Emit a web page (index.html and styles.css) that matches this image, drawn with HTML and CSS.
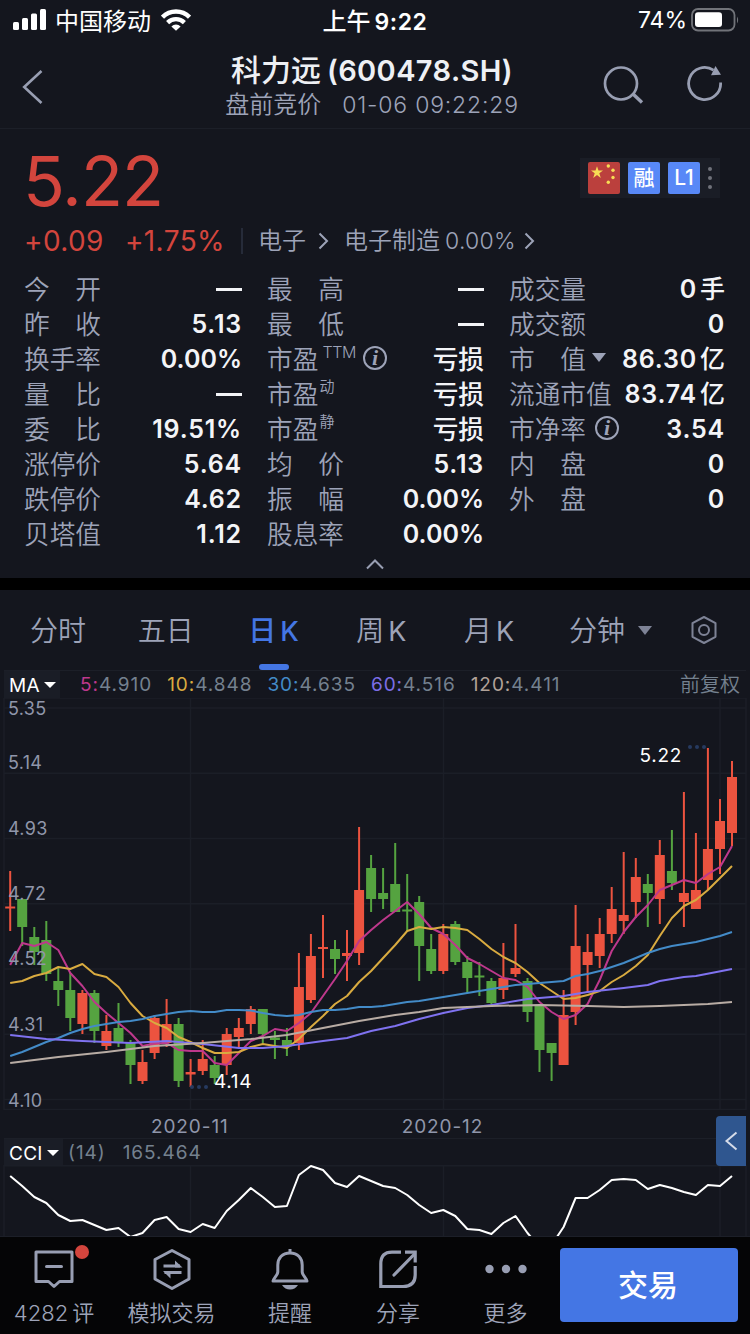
FILE: index.html
```
<!DOCTYPE html>
<html lang="zh-CN">
<head>
    <meta charset="UTF-8">
    <meta name="viewport" content="width=device-width, initial-scale=1.0">
    <title>科力远(600478.SH)</title>
    <link rel="stylesheet" href="styles.css">
    <script src="chart.js" defer></script>
</head>
<body>
    <div class="status">
        <svg class="signal" width="34" height="22" viewBox="0 0 34 22" fill="#fff">
            <rect x="0" y="13" width="6" height="8" rx="1.5"/>
            <rect x="9" y="9" width="6" height="12" rx="1.5"/>
            <rect x="18" y="4.5" width="6" height="16.5" rx="1.5"/>
            <rect x="27" y="0" width="6" height="21" rx="1.5"/>
        </svg>
        <span class="carrier">中国移动</span>
        <svg class="wifi" width="30" height="22" viewBox="0 0 30 22" fill="none" stroke="#fff" stroke-width="4.4">
            <path d="M1.5 8.2A19 19 0 0 1 28.5 8.2"/>
            <path d="M6.6 13.6A12 12 0 0 1 23.4 13.6"/>
            <path d="M15 21.8L10.4 17.4A6.6 6.6 0 0 1 19.6 17.4Z" fill="#fff" stroke="none"/>
        </svg>
        <span class="clock">上午<b>9:22</b></span>
        <span class="percent">74%</span>
        <svg class="battery" width="49" height="24" viewBox="0 0 49 24">
            <rect x="1" y="1" width="42.5" height="21.5" rx="6" fill="none" stroke="#717379" stroke-width="1.8"/>
            <rect x="4" y="4.3" width="27" height="14.8" rx="3" fill="#fff"/>
            <path d="M46 8.5Q48.3 12 46 15.5Z" fill="#717379"/>
        </svg>
    </div>

    <div class="nav">
        <svg class="back" width="22" height="36" viewBox="0 0 22 36" fill="none" stroke="#989eb2" stroke-width="2.6">
            <path d="M19.5 2L2.2 18L19.5 34"/>
        </svg>
        <div class="nav-title">
            <h1>科力远<span>(600478.SH)</span></h1>
            <p>盘前竞价<span>01-06 09:22:29</span></p>
        </div>
        <div class="nav-icons">
            <svg width="42" height="40" viewBox="0 0 42 40" fill="none" stroke="#989eb2" stroke-width="2.7">
                <circle cx="19" cy="18.5" r="16"/>
                <path d="M30.5 28.5L40 37.5" stroke-width="3.4"/>
            </svg>
            <svg width="38" height="40" viewBox="0 0 38 40" fill="none" stroke="#989eb2" stroke-width="2.8">
                <path d="M34.6 17.5A16 16 0 1 1 27.5 5.2"/>
                <path d="M29.5 1L35 9.8L25 10.3Z" fill="#989eb2" stroke="none"/>
            </svg>
        </div>
    </div>

    <div class="quote">
        <div class="price-row">
            <div class="price">5.22</div>
            <div class="tags">
                <svg width="32" height="32" viewBox="0 0 32 32">
                    <rect width="32" height="32" rx="2" fill="#bb403d"/>
                    <g fill="#f7dc55">
                        <path d="M9 4.2L10.5 8.6H15L11.3 11.3L12.8 15.9L9 13.1L5.2 15.9L6.7 11.3L3 8.6H7.5Z"/>
                        <circle cx="20.3" cy="4" r="1.7"/>
                        <circle cx="25" cy="8.3" r="1.7"/>
                        <circle cx="25" cy="15.5" r="1.7"/>
                        <circle cx="20.3" cy="20.2" r="1.7"/>
                    </g>
                </svg>
                <span class="tag">融</span>
                <span class="tag">L1</span>
                <svg width="4" height="24" viewBox="0 0 4 24" fill="#6f727b">
                    <circle cx="2" cy="3" r="2"/>
                    <circle cx="2" cy="12" r="2"/>
                    <circle cx="2" cy="21" r="2"/>
                </svg>
            </div>
        </div>
        <div class="change-row">
            <span class="change">+0.09</span>
            <span class="change change-rate">+1.75%</span>
            <span class="sector">电子</span>
            <svg class="arrow" width="11" height="18" viewBox="0 0 11 18"><path d="M1.5 1.5L9 9L1.5 16.5"/></svg>
            <span class="sector-sub">电子制造<i>0.00%</i></span>
            <svg class="arrow arrow-last" width="11" height="18" viewBox="0 0 11 18"><path d="M1.5 1.5L9 9L1.5 16.5"/></svg>
        </div>
        <div class="details">
            <dl>
                <div><dt>今　开</dt><dd><hr></dd></div>
                <div><dt>昨　收</dt><dd>5.13</dd></div>
                <div><dt>换手率</dt><dd class="pct">0.00%</dd></div>
                <div><dt>量　比</dt><dd><hr></dd></div>
                <div><dt>委　比</dt><dd>19.51%</dd></div>
                <div><dt>涨停价</dt><dd>5.64</dd></div>
                <div><dt>跌停价</dt><dd>4.62</dd></div>
                <div><dt>贝塔值</dt><dd>1.12</dd></div>
            </dl>
            <dl>
                <div><dt>最　高</dt><dd><hr></dd></div>
                <div><dt>最　低</dt><dd><hr></dd></div>
                <div><dt>市盈<sup class="ttm">TTM</sup><em class="info">i</em></dt><dd class="cn">亏损</dd></div>
                <div><dt>市盈<sup>动</sup></dt><dd class="cn">亏损</dd></div>
                <div><dt>市盈<sup>静</sup></dt><dd class="cn">亏损</dd></div>
                <div><dt>均　价</dt><dd>5.13</dd></div>
                <div><dt>振　幅</dt><dd class="pct">0.00%</dd></div>
                <div><dt>股息率</dt><dd class="pct">0.00%</dd></div>
            </dl>
            <dl>
                <div><dt>成交量</dt><dd>0<s>手</s></dd></div>
                <div><dt>成交额</dt><dd>0</dd></div>
                <div><dt>市　值<u class="caret"></u></dt><dd>86.30<s>亿</s></dd></div>
                <div><dt>流通市值</dt><dd>83.74<s>亿</s></dd></div>
                <div><dt>市净率<em class="info">i</em></dt><dd>3.54</dd></div>
                <div><dt>内　盘</dt><dd>0</dd></div>
                <div><dt>外　盘</dt><dd>0</dd></div>
            </dl>
        </div>
        <svg class="fold" width="18" height="11" viewBox="0 0 18 11" fill="none" stroke="#989eb2" stroke-width="2">
            <path d="M1 9.5L9 1.5L17 9.5"/>
        </svg>
    </div>

    <div class="tabs">
        <div class="tab">分时</div>
        <div class="tab">五日</div>
        <div class="tab active">日<span>K</span></div>
        <div class="tab">周<span>K</span></div>
        <div class="tab">月<span>K</span></div>
        <div class="tab">分钟</div>
        <u class="caret"></u>
        <svg class="setting" width="28" height="30" viewBox="0 0 28 30" fill="none" stroke="#7e8396" stroke-width="2">
            <path d="M14 2L25.5 8.2V21.8L14 28L2.5 21.8V8.2Z" stroke-linejoin="round"/>
            <circle cx="14" cy="15" r="5"/>
        </svg>
    </div>

    <div class="chart">
        <div class="index-row">
            <div class="index-name">MA<u class="caret"></u></div>
            <span class="ma ma5"><b>5:</b>4.910</span>
            <span class="ma ma10"><b>10:</b>4.848</span>
            <span class="ma ma30"><b>30:</b>4.635</span>
            <span class="ma ma60"><b>60:</b>4.516</span>
            <span class="ma ma120"><b>120:</b>4.411</span>
            <span class="adjust">前复权</span>
        </div>
        <svg class="plot" id="kline" width="750" height="412" viewBox="0 698 750 412"></svg>
        <div class="dates">
            <span>2020-11</span>
            <span>2020-12</span>
        </div>
        <div class="index-row cci-row">
            <div class="index-name">CCI<u class="caret"></u></div>
            <span class="cci-param">(14)</span>
            <span class="cci-value">165.464</span>
        </div>
        <svg class="plot" id="cci" width="750" height="71" viewBox="0 1165 750 71"></svg>
        <div class="drawer">
            <svg width="14" height="20" viewBox="0 0 14 20" fill="none" stroke="#d5dbe8" stroke-width="2">
                <path d="M12.5 1.5L2.5 10L12.5 18.5"/>
            </svg>
        </div>
    </div>

    <div class="toolbar">
        <div class="tool tool-comment">
            <svg width="42" height="42" viewBox="0 0 42 42" fill="none" stroke="#989eb2" stroke-width="3" stroke-linejoin="round">
                <path d="M3 4H39V33.5H26.5L21 38.5L15.5 33.5H3Z"/>
                <path d="M13.5 18.5H28.5" stroke-linecap="round"/>
            </svg>
            <i class="dot"></i>
            <span>4282<s>评</s></span>
        </div>
        <div class="tool tool-mock">
            <svg width="42" height="42" viewBox="0 0 42 42" fill="none" stroke="#989eb2" stroke-width="3" stroke-linejoin="round">
                <path d="M21 2.5L38 11.5V31L21 40.5L4 31V11.5Z"/>
                <path d="M12.5 18H29M13.5 24.5H30.5" stroke-width="2.8"/>
                <path d="M24 12.5L31.5 19.4H24ZM19.5 30.5L12 23.1H19.5Z" fill="#989eb2" stroke="none"/>
            </svg>
            <span>模拟交易</span>
        </div>
        <div class="tool tool-alert">
            <svg width="42" height="42" viewBox="0 0 42 42" fill="none" stroke="#989eb2" stroke-width="3" stroke-linejoin="round">
                <path d="M21 1V5"/>
                <path d="M21 5C13 5 8.8 10.5 8.8 17V24C8.8 27 4 31 4 33H38C38 31 33.2 27 33.2 24V17C33.2 10.5 29 5 21 5Z"/>
                <path d="M13 37H29Q26 41.5 21 41.5T13 37Z" fill="#989eb2" stroke="none"/>
            </svg>
            <span>提醒</span>
        </div>
        <div class="tool tool-share">
            <svg width="42" height="42" viewBox="0 0 42 42" fill="none" stroke="#989eb2" stroke-width="3.2">
                <path d="M24 4.2H15Q3.8 4.2 3.8 16V38.5H26Q38.2 38.5 38.2 27V18"/>
                <path d="M17 27L37 6.5" stroke-linecap="round"/>
                <path d="M28 4.2H38.2V14.5"/>
            </svg>
            <span>分享</span>
        </div>
        <div class="tool tool-more">
            <svg width="42" height="42" viewBox="0 0 42 42" fill="#989eb2">
                <circle cx="4.5" cy="21" r="4.2"/>
                <circle cx="21" cy="21" r="4.2"/>
                <circle cx="37.5" cy="21" r="4.2"/>
            </svg>
            <span>更多</span>
        </div>
        <div class="trade">交易</div>
    </div>
</body>
</html>
```
FILE: styles.css
```
*{
    margin: 0;
    padding: 0;
    box-sizing: border-box;
}
body{
    width: 750px;
    height: 1334px;
    overflow: hidden;
    background-color: #14161e;
    color: #9da3b8;
    font-family: Inter, "Noto Sans CJK SC", sans-serif;
    font-weight: 350;
}
i, em, s, u, b{
    font-style: normal;
    font-weight: inherit;
    text-decoration: none;
}
svg{
    display: block;
    flex: none;
}
/* 下拉小三角 */
.caret{
    display: inline-block;
    border: 7px solid transparent;
    border-top: 9px solid #9da3b8;
    border-bottom: 0;
}

/* 状态栏 */
.status{
    position: relative;
    height: 40px;
    padding: 0 10px 2px 13px;
    display: flex;
    align-items: center;
    color: #fff;
    font-size: 24px;
}
.signal{
    margin-top: 1px;
}
.carrier{
    margin-left: 8px;
    font-weight: 400;
}
.wifi{
    margin: 1px 0 0 10px;
}
.clock{
    position: absolute;
    left: 0;
    width: 750px;
    text-align: center;
    font-weight: 500;
}
.clock b{
    font-weight: 600;
    margin-left: 4px;
    font-size: 23px;
    letter-spacing: 0.6px;
}
.percent{
    margin-left: auto;
    padding-top: 2px;
    font-size: 23px;
    font-weight: 400;
}
.battery{
    margin: 1px 0 0 4px;
}

/* 顶部导航 */
.nav{
    height: 89px;
    padding: 0 26px 0 22px;
    display: flex;
    justify-content: space-between;
    border-bottom: 1px solid #1c1f28;
}
.back{
    margin-top: 29px;
}
.nav-title{
    width: 300px;
    margin-left: 98px;
    text-align: center;
}
.nav-title h1{
    height: 36px;
    margin-top: 12px;
    line-height: 36px;
    font-size: 30px;
    font-weight: 500;
    color: #eef0f4;
    white-space: nowrap;
}
.nav-title h1 span{
    margin-left: 6px;
    font-size: 29px;
    font-weight: 600;
    letter-spacing: 0.4px;
}
.nav-title p{
    line-height: 34px;
    font-size: 24px;
    white-space: nowrap;
}
.nav-title p span{
    margin-left: 21px;
    font-size: 23px;
    letter-spacing: 0.8px;
}
.nav-icons{
    display: flex;
    gap: 42px;
    margin-top: 25px;
}

/* 行情 */
.quote{
    height: 461px;
    padding: 0 25px 0 24px;
    border-bottom: 12px solid #000;
}
.price-row{
    height: 92px;
    display: flex;
    justify-content: space-between;
}
.price{
    margin: 17px 0 0 -1px;
    line-height: 70px;
    font-size: 69px;
    font-weight: 400;
    letter-spacing: -1px;
    color: #d3453d;
}
.tags{
    width: 140px;
    height: 40px;
    margin: 29px 5px 0 0;
    padding-left: 8px;
    display: flex;
    align-items: center;
    gap: 8px;
    background-color: #1a1d26;
}
.tag{
    width: 32px;
    height: 32px;
    line-height: 32px;
    border-radius: 2px;
    background-color: #5888f7;
    color: #fff;
    font-size: 21px;
    font-weight: 500;
    text-align: center;
}
.change-row{
    height: 40px;
    display: flex;
    align-items: center;
    font-size: 24px;
}
.change{
    font-size: 28px;
    font-weight: 400;
    letter-spacing: 0.4px;
    color: #d3453d;
}
.change-rate{
    margin-left: 21px;
}
.sector{
    margin-left: 16px;
    padding-left: 15px;
    line-height: 26px;
    border-left: 2px solid #262b39;
}
.sector-sub{
    margin-left: 15px;
    display: flex;
    align-items: center;
    line-height: 26px;
}
.sector-sub i{
    margin-left: 5px;
    font-size: 23px;
    letter-spacing: 0.3px;
}
.arrow{
    margin-left: 12px;
    fill: none;
    stroke: #9da3b8;
    stroke-width: 2;
}
.arrow-last{
    margin-left: 8px;
}
.details{
    margin-top: 11px;
    display: grid;
    grid-template-columns: 218px 217px 216px;
    column-gap: 25px;
    height: 280px;
}
.details dl div{
    height: 35px;
    display: flex;
    justify-content: space-between;
    align-items: center;
    line-height: 35px;
    font-size: 25.7px;
    white-space: nowrap;
}
.details dt{
    display: flex;
    align-items: center;
}
.details dd{
    display: flex;
    align-items: center;
    color: #f3f4f7;
    font-size: 25px;
    font-weight: 600;
    letter-spacing: 0.8px;
}
.details dd.pct{
    letter-spacing: 0;
}
.details dd hr{
    width: 26px;
    height: 3px;
    border: 0;
    background-color: #f3f4f7;
}
.details dd s{
    margin-left: 3px;
    font-weight: 500;
    font-size: 25px;
    letter-spacing: 0;
}
.details dd.cn{
    font-size: 25.7px;
    font-weight: 500;
    letter-spacing: 0;
}
.details sup{
    margin: -15px 0 0 1px;
    font-size: 15px;
    line-height: 20px;
}
.details sup.ttm{
    margin-left: 4px;
    font-size: 16px;
    letter-spacing: -0.4px;
}
.info{
    width: 24px;
    height: 24px;
    margin: -3px 0 0 9px;
    border: 2px solid #9da3b8;
    border-radius: 50%;
    line-height: 20px;
    text-align: center;
    font-family: "Liberation Serif", serif;
    font-size: 22px;
    font-style: italic;
    font-weight: bold;
}
.ttm + .info{
    margin-left: 7px;
}
.details .caret{
    margin: -5px 0 0 6px;
}
.fold{
    margin: 7px auto 0;
}

/* 周期切换 */
.tabs{
    height: 80px;
    padding: 0 32px 0 4px;
    display: flex;
    align-items: center;
    font-size: 28px;
}
.tab{
    position: relative;
    width: 107.8px;
    height: 80px;
    line-height: 82px;
    text-align: center;
}
.tab span{
    margin-left: 4px;
    font-size: 27px;
    font-weight: 400;
}
.tab.active{
    color: #4476e4;
    font-weight: 500;
}
.tab.active span{
    font-weight: 500;
}
.tab.active::after{
    content: "";
    position: absolute;
    left: 39px;
    bottom: 0;
    width: 30px;
    height: 6px;
    border-radius: 3px;
    background-color: #4476e4;
}
.tabs .caret{
    margin-left: -13px;
    border-top-color: #7e8396;
}
.setting{
    margin-left: auto;
}

/* 图表 */
.chart{
    position: relative;
    height: 566px;
}
.index-row{
    height: 28px;
    margin: 0 4px;
    display: flex;
    align-items: center;
    border-top: 1px solid #1c1f28;
    font-size: 19px;
    font-weight: 400;
    letter-spacing: 0.95px;
    line-height: 29px;
    color: #74818f;
    white-space: nowrap;
}
.index-name{
    height: 27px;
    width: 56px;
    padding-left: 5px;
    line-height: 29px;
    letter-spacing: 0.3px;
    background-color: #1a1d26;
    color: #fff;
}
.index-name .caret{
    margin: 0 0 4px 4px;
    border-width: 6px 6px 0;
    border-top-color: #fff;
}
.ma{
    margin-left: 15px;
}
.ma5{
    margin-left: 20px;
}
.ma5 b{
    color: #be388c;
}
.ma10 b{
    color: #d9ab40;
}
.ma30 b{
    color: #438bc8;
}
.ma60 b{
    color: #7c6ee6;
}
.ma120 b{
    color: #b1a299;
}
.adjust{
    margin: 0 6px 0 auto;
    padding-top: 1px;
    font-size: 20px;
    font-weight: 350;
    letter-spacing: 0;
}
.cci-row{
    height: 27px;
}
.cci-row .index-name{
    width: 59px;
}
.cci-param{
    margin-left: 5px;
}
.cci-value{
    margin-left: 17px;
}
.dates{
    height: 28px;
    padding-left: 151px;
    display: flex;
    gap: 173px;
    line-height: 33px;
    font-size: 19px;
    font-weight: 400;
    letter-spacing: 0.9px;
    color: #9096aa;
}
.grid{
    stroke: #1b1e27;
    stroke-width: 1.5;
    fill: none;
}
.line{
    fill: none;
    stroke-width: 2;
    stroke-linejoin: round;
}
.axis{
    fill: #9096aa;
    font-size: 18px;
    font-weight: 400;
    letter-spacing: 0.3px;
}
.mark{
    fill: #fff;
    font-size: 19px;
    font-weight: 400;
    letter-spacing: 0.7px;
}
.drawer{
    position: absolute;
    right: 4px;
    top: 446px;
    width: 30px;
    height: 50px;
    border-radius: 4px 0 0 4px;
    background-color: #2f568f;
    display: flex;
    align-items: center;
    justify-content: center;
}

/* 底部工具栏 */
.toolbar{
    height: 98px;
    display: flex;
    background-color: #050506;
    border-top: 1px solid #1c1f28;
}
.tool{
    position: relative;
    width: 108px;
    padding-top: 11px;
    display: flex;
    flex-direction: column;
    align-items: center;
    font-size: 22px;
    line-height: 30px;
    white-space: nowrap;
}
.tool span{
    margin-top: 8px;
}
.tool s{
    margin-left: 4px;
}
.tool-mock{
    width: 127px;
}
.tool-alert{
    width: 110px;
}
.tool-share{
    width: 106px;
}
.tool-more{
    width: 109px;
}
.dot{
    position: absolute;
    left: 75px;
    top: 8px;
    width: 14px;
    height: 14px;
    border-radius: 50%;
    background-color: #d3453d;
}
.trade{
    width: 178px;
    height: 74px;
    margin-top: 11px;
    padding-right: 2px;
    border-radius: 4px;
    background-color: #4476e4;
    color: #fff;
    font-size: 30px;
    font-weight: 500;
    line-height: 75px;
    text-align: center;
}
```
FILE: chart.js
```
const STEP = 12.03
const X0 = 10.2
const x = i => +(X0 + i * STEP).toFixed(1)

// 最高, 实体上沿, 实体下沿, 最低, 涨(r)跌(g)
const candles = [
    [871, 906.5, 908.5, 931, "r"], [899, 899, 927, 946, "g"], [927, 937, 952, 965, "g"],
    [921, 940, 974, 981, "g"], [968, 981, 990, 1006, "g"], [973, 990, 1018, 1031, "g"],
    [990, 993, 1024, 1034, "r"], [990, 993, 1031, 1043, "g"], [1015, 1031, 1046, 1050, "r"],
    [1003, 1028, 1043, 1047, "g"], [1040, 1043, 1065, 1084, "g"], [1050, 1062, 1081, 1084, "r"],
    [1015, 1018, 1053, 1059, "r"], [999, 1024, 1043, 1047, "r"], [1018, 1024, 1081, 1087, "g"],
    [1059, 1072, 1074.5, 1087, "r"], [1040, 1059, 1071, 1075, "r"], [1056, 1065, 1078, 1084, "g"],
    [1028, 1034, 1065, 1075, "r"], [1018, 1028, 1037, 1047, "r"], [1006, 1009, 1024, 1034, "r"],
    [1009, 1009, 1034, 1043, "g"], [1031, 1037.5, 1040, 1059, "g"], [1028, 1040, 1046.5, 1056, "g"],
    [953, 987, 1043, 1050, "r"], [934, 956, 1000, 1003, "r"], [915, 947, 949, 978, "r"],
    [940, 949, 959, 974, "g"], [930, 953, 956, 981, "r"], [827, 890, 953, 965, "r"],
    [855, 868, 899, 912, "g"], [868, 893, 899, 909, "g"], [843, 884, 912, 912, "g"],
    [874, 909.5, 911.5, 931, "g"], [896, 902, 946, 981, "g"], [934, 949, 971, 974, "g"],
    [924, 934, 971, 974, "r"], [921, 924, 962, 965, "g"], [956, 962, 978, 993, "g"],
    [962, 975.5, 977.5, 996, "g"], [978, 981, 1003, 1006, "g"], [943, 978, 990, 999, "r"],
    [924, 968, 974, 977, "r"], [978, 981, 1012, 1022, "g"], [1004, 1005, 1050, 1072, "g"],
    [1043, 1043, 1053, 1081, "g"], [990, 1015, 1065, 1065, "r"], [905, 946, 1012, 1025, "r"],
    [934, 952, 965, 992, "r"], [918, 934, 956, 968, "r"], [887, 909, 934, 943, "r"],
    [852, 915, 921, 934, "r"], [858, 877, 902, 918, "r"], [874, 884, 893, 927, "g"],
    [840, 855, 899, 924, "r"], [830, 871, 883, 890, "g"], [792, 893, 902, 927, "r"],
    [833, 890, 909, 909, "r"], [748, 849, 880, 890, "r"], [799, 821, 849, 874, "r"],
    [761, 777, 833, 846, "r"]
]

const ma5 = [965, 943, 946, 942, 950, 973, 986, 1002, 1013, 1023, 1033, 1046, 1043.5, 1043, 1050, 1051, 1051, 1063, 1065, 1053,
    1041, 1036, 1029, 1031, 1023, 1013, 996, 979, 961, 941, 930, 920, 911, 902, 914, 928, 934, 945, 958, 964,
    971, 978, 980, 987, 1002, 1012, 1019, 1015, 1004, 980, 951, 932, 917, 905, 890, 885, 880, 883, 874, 867, 846]
const ma10 = [983, 981, 976, 973, 967, 969, 964, 974, 977, 987, 1003, 1016, 1023, 1028, 1037, 1042, 1048, 1053, 1053, 1052,
    1047, 1044, 1046, 1048, 1039, 1027, 1016, 1004, 996, 982, 971, 958, 945, 931, 927, 929, 927, 928, 930, 939,
    949, 957, 963, 972, 983, 991, 999, 998, 995, 991, 982, 975, 966, 955, 936, 918, 906, 900, 890, 878, 866]
const ma30 = [1056, 1052, 1047, 1042, 1038, 1033, 1029, 1026, 1024, 1022, 1021, 1019, 1016, 1014, 1012, 1011, 1012, 1012, 1010, 1010,
    1010.5, 1013, 1015, 1016, 1015, 1012, 1010, 1010, 1009, 1007, 1007, 1006, 1004, 1002, 1001, 999, 997, 995, 993, 991,
    989, 987, 985, 984, 983, 982, 981, 976, 974, 971, 967, 963, 958, 953, 949, 946, 944, 942, 939, 936, 932]
// 长周期均线变化平缓, 只记录拐点 {序号: 位置}
const ma60 = {0: 1035, 3: 1039, 6: 1041, 10: 1043, 13: 1041, 16: 1044, 19: 1048, 21: 1048, 23: 1046, 26: 1041, 28: 1038, 30: 1031,
    32: 1026, 34: 1019, 36: 1013, 38: 1008, 40: 1005, 43: 999, 46: 996, 48: 992, 51: 988, 53: 985, 54: 981, 56: 977, 57: 976, 60: 969}
const ma120 = {0: 1063, 4: 1057, 8: 1052, 12: 1046, 16: 1043, 20: 1039, 23: 1035, 26: 1028, 29: 1021, 32: 1015, 34: 1012,
    36: 1008, 40: 1006, 44: 1005, 48: 1006, 51: 1007, 54: 1006, 58: 1004, 60: 1002}
const cci = [1176, 1186, 1197, 1203, 1215, 1221, 1220, 1225, 1230, 1228, 1237, 1233, 1220, 1217, 1229, 1232, 1224, 1228, 1211, 1200,
    1188, 1197, 1207, 1206, 1175, 1166, 1170, 1183, 1187, 1176, 1181, 1186, 1188, 1195, 1205, 1213, 1210, 1216, 1229, 1230,
    1234, 1223, 1216, 1233, 1247, 1245, 1227, 1198, 1198, 1190, 1180, 1179, 1180, 1189, 1185, 1188, 1192, 1195, 1185, 1186, 1176]

const labels = [["5.35", 715], ["5.14", 769], ["4.93", 835], ["4.72", 900], ["4.52", 965], ["4.31", 1031], ["4.10", 1107]]

const line = (data, color) => {
    const points = Object.entries(data).map(([i, y]) => `${x(i)},${y}`).join(" ")
    return `<polyline class="line" points="${points}" stroke="${color}"/>`
}
const dots = (left, y) => [0, 7, 14].map(d => `<circle cx="${left + d}" cy="${y}" r="2" fill="#263a60"/>`).join("")

const drawKline = () => {
    let html = `<path class="grid" d="M4 698H746V1109.5H4ZM190.5 698V1110M443.5 698V1110M720 698V1110`
    for(let y = 708; y < 1110; y += 65.25){
        html += `M4 ${y}H746`
    }
    html += `"/>`
    candles.forEach(([high, top, bottom, low, type], i)=>{
        const color = type === "r" ? "#ec533f" : "#55a340"
        html += `<rect x="${x(i) - 1}" y="${high}" width="2" height="${low - high}" fill="${color}"/>`
        html += `<rect x="${x(i) - 5}" y="${top}" width="10" height="${bottom - top}" fill="${color}"/>`
    })
    html += line(ma5, "#be388c") + line(ma10, "#d9ab40") + line(ma30, "#438bc8")
    html += line(ma60, "#7f72f0") + line(ma120, "#b8aca4")
    labels.forEach(([text, y])=>{
        html += `<text class="axis" x="8" y="${y}">${text}</text>`
    })
    html += dots(690, 747) + `<text class="mark" x="639.5" y="762">5.22</text>`
    html += dots(192, 1087) + `<text class="mark" x="214" y="1088">4.14</text>`
    document.querySelector("#kline").innerHTML = html
}

const drawCci = () => {
    document.querySelector("#cci").innerHTML =
        `<path class="grid" d="M4 1165.7H746V1240H4ZM190.5 1165V1240M443.5 1165V1240M720 1165V1240"/>` + line(cci, "#fff")
}

drawKline()
drawCci()
```
